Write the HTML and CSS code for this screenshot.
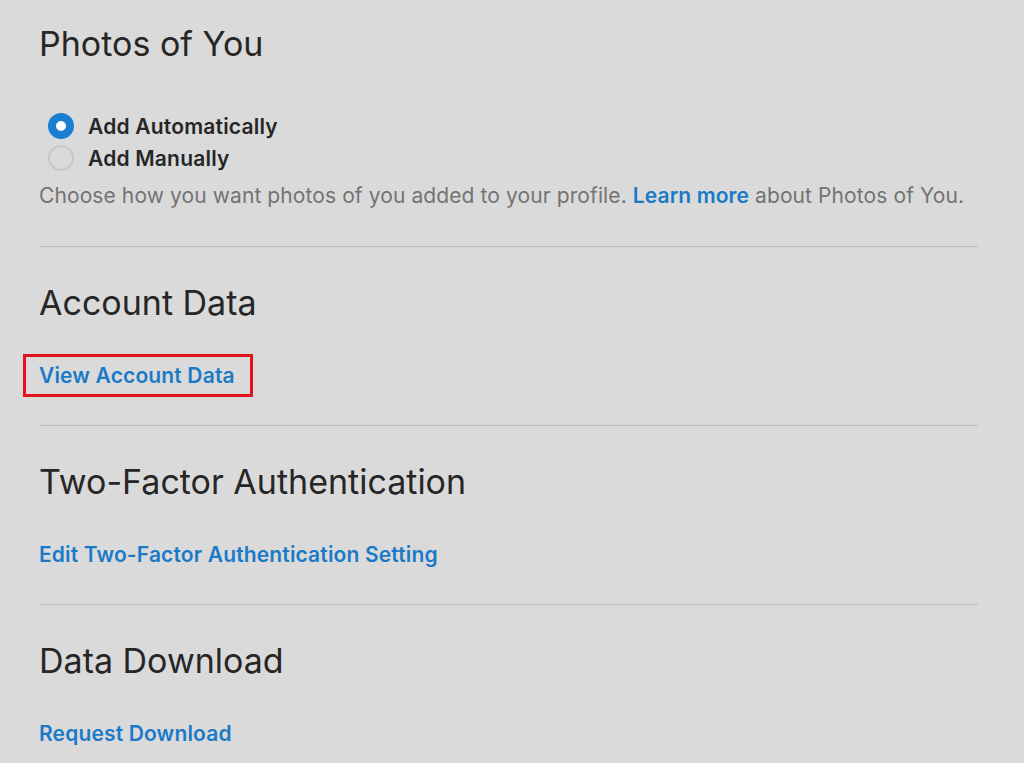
FILE: index.html
```html
<!DOCTYPE html>
<html lang="en">
<head>
<meta charset="utf-8">
<title>Settings</title>
<link rel="stylesheet" href="styles.css">
</head>
<body>
<main class="page">
  <section class="section first">
    <h2 class="title">Photos of You</h2>
    <div class="options">
      <label class="option"><span class="radio checked"></span><span class="option-label">Add Automatically</span></label>
      <label class="option"><span class="radio"></span><span class="option-label">Add Manually</span></label>
    </div>
    <p class="desc">Choose how you want photos of you added to your profile. <a class="inline-link" href="#">Learn more</a> about Photos of You.</p>
  </section>
  <section class="section">
    <h2 class="title">Account Data</h2>
    <a class="action highlighted" href="#">View Account Data</a>
  </section>
  <section class="section">
    <h2 class="title">Two-Factor Authentication</h2>
    <a class="action" href="#">Edit Two-Factor Authentication Setting</a>
  </section>
  <section class="section last">
    <h2 class="title">Data Download</h2>
    <a class="action" href="#">Request Download</a>
  </section>
</main>
</body>
</html>
```
FILE: styles.css
```css
html, body {
  margin: 0;
  padding: 0;
  background: #dadada;
}
body {
  font-family: Inter, "Liberation Sans", Arial, sans-serif;
  color: #262626;
  -webkit-font-smoothing: antialiased;
}
.page {
  width: 939px;
  margin-left: 39px;
}
.section {
  display: flex;
  flex-direction: column;
  align-items: flex-start;
  padding-top: 36px;
  padding-bottom: 35px;
  border-bottom: 1px solid #bcbcbc;
}
.section.first {
  padding-top: 24px;
  padding-bottom: 36px;
}
.section.last {
  border-bottom: none;
}
.title {
  margin: 0;
  font-size: 34px;
  font-weight: 400;
  line-height: 40px;
  letter-spacing: 0;
  color: #262626;
}
.options {
  display: flex;
  flex-direction: column;
  margin-top: 46px;
  margin-left: 9px;
}
.option {
  display: flex;
  align-items: center;
  gap: 14px;
  height: 32px;
  font-size: 21px;
  font-weight: 600;
  letter-spacing: 0.2px;
  color: #262626;
}
.radio {
  box-sizing: border-box;
  width: 26px;
  height: 26px;
  border-radius: 50%;
  border: 2px solid #c6c6c6;
  background: transparent;
}
.radio.checked {
  border: 8px solid #1a7fd0;
  background: #ffffff;
}
.desc {
  margin: 8px 0 0;
  font-size: 21px;
  line-height: 28px;
  letter-spacing: 0.1px;
  color: #737373;
}
.inline-link {
  color: #1a7ac8;
  font-weight: 600;
  text-decoration: none;
}
.action {
  position: relative;
  margin-top: 39px;
  font-size: 21px;
  line-height: 28px;
  font-weight: 600;
  letter-spacing: 0.15px;
  color: #1a7ac8;
  text-decoration: none;
}
.action.highlighted::after {
  content: "";
  position: absolute;
  top: -8px;
  bottom: -7px;
  left: -16px;
  right: -18px;
  border: 3px solid #e3131b;
}
```
